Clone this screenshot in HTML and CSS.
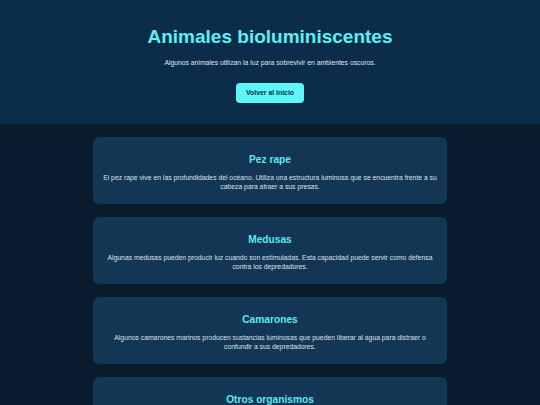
FILE: index.html
```html
<!DOCTYPE html>
<html lang="es">
<head>
<meta charset="utf-8">
<title>Animales bioluminiscentes</title>
<link rel="stylesheet" href="styles.css">
</head>
<body>
<header class="hero">
  <h1 class="hero-title">Animales bioluminiscentes</h1>
  <p class="hero-sub">Algunos animales utilizan la luz para sobrevivir en ambientes oscuros.</p>
  <a class="btn" href="#">Volver al inicio</a>
</header>
<main class="list">
  <section class="card">
    <h2 class="card-title">Pez rape</h2>
    <p class="card-text">El pez rape vive en las profundidades del océano. Utiliza una estructura luminosa que se encuentra frente a su cabeza para atraer a sus presas.</p>
  </section>
  <section class="card">
    <h2 class="card-title">Medusas</h2>
    <p class="card-text">Algunas medusas pueden producir luz cuando son estimuladas. Esta capacidad puede servir como defensa contra los depredadores.</p>
  </section>
  <section class="card">
    <h2 class="card-title">Camarones</h2>
    <p class="card-text">Algunos camarones marinos producen sustancias luminosas que pueden liberar al agua para distraer o confundir a sus depredadores.</p>
  </section>
  <section class="card">
    <h2 class="card-title">Otros organismos</h2>
    <p class="card-text">Existen bacterias, hongos y otros seres vivos que también producen luz mediante reacciones químicas.</p>
  </section>
</main>
</body>
</html>
```
FILE: styles.css
```css
* { box-sizing: border-box; }
html, body { margin: 0; padding: 0; }
body {
  background: #0a1b2d;
  font-family: "Liberation Sans", Arial, sans-serif;
  color: #dde3ea;
}
.hero {
  background: #0b2d4a;
  text-align: center;
  padding: 26px 20px 21px;
}
.hero-title {
  margin: 0;
  font-size: 19px;
  line-height: 22px;
  font-weight: bold;
  color: #5cf0f6;
}
.hero-sub {
  margin: 11px 0 0;
  font-size: 6.8px;
  line-height: 8px;
  color: #dfe6ee;
}
.btn {
  display: inline-block;
  margin-top: 16px;
  width: 68px;
  height: 20px;
  line-height: 20px;
  border-radius: 4px;
  background: #5ef5fb;
  color: #0b2d4a;
  font-size: 6.9px;
  font-weight: bold;
  text-decoration: none;
}
.list {
  display: flex;
  flex-direction: column;
  align-items: center;
  gap: 13px;
  padding-top: 13px;
}
.card {
  width: 354px;
  background: #133654;
  border-radius: 6px;
  padding: 17px 10px 13px;
  text-align: center;
}
.card-title {
  margin: 0;
  font-size: 10.2px;
  line-height: 12px;
  font-weight: bold;
  color: #5ee6f2;
}
.card-text {
  margin: 7px 0 0;
  font-size: 6.8px;
  line-height: 9px;
  color: #dbe2ea;
}
```
